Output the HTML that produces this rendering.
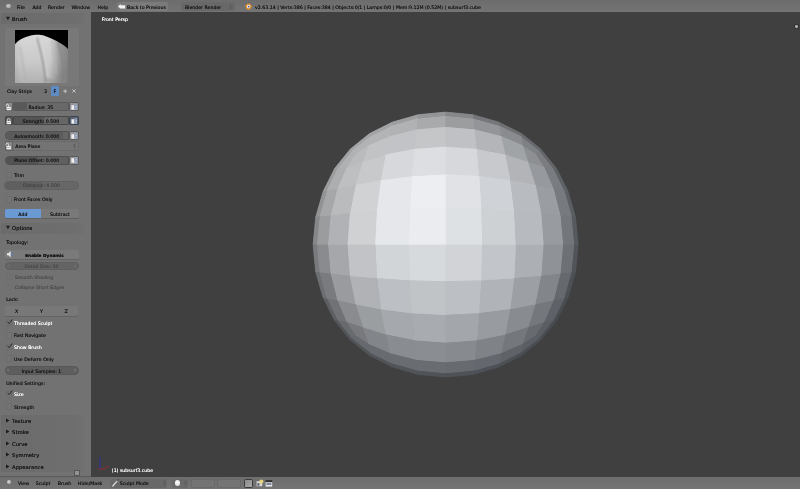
<!DOCTYPE html>
<html><head><meta charset="utf-8"><title>Blender</title>
<style>
html,body{margin:0;padding:0;background:#404040;}
body{width:800px;height:489px;position:relative;overflow:hidden;font-family:"DejaVu Sans","Liberation Sans",sans-serif;}
div,.abs,.t{position:absolute;}
.t{white-space:nowrap;text-shadow:0 0 0.3px currentColor;}
#root{position:absolute;left:0;top:0;width:800px;height:489px;will-change:transform;}
svg{display:block;overflow:visible}
</style></head><body><div id="root">
<div class="viewport" style="left:91.30px;top:12.20px;width:708.70px;height:464.40px;background:#404040;"></div>
<svg class="abs" style="left:0;top:0" width="800" height="489" viewBox="0 0 800 489"><g stroke-width="0.7" stroke-linejoin="round"><polygon points="355.2,335.0 351.8,338.4 369.7,352.6 368.5,343.7" fill="#66696d" stroke="#66696d"/>
<polygon points="350.2,340.0 369.6,355.6 369.7,352.6 351.8,338.4" fill="#525558" stroke="#525558"/>
<polygon points="392.6,367.1 391.7,363.4 369.7,352.6 369.6,355.6" fill="#515458" stroke="#515458"/>
<polygon points="389.9,353.0 368.5,343.7 369.7,352.6 391.7,363.4" fill="#686b6f" stroke="#686b6f"/>
<polygon points="445.6,362.3 416.4,359.7 417.6,370.7 445.6,373.4" fill="#696d72" stroke="#696d72"/>
<polygon points="389.9,353.0 391.7,363.4 417.6,370.7 416.4,359.7" fill="#696d71" stroke="#696d71"/>
<polygon points="392.6,367.1 418.3,374.5 417.6,370.7 391.7,363.4" fill="#515459" stroke="#515459"/>
<polygon points="445.6,377.1 445.6,373.4 417.6,370.7 418.3,374.5" fill="#505459" stroke="#505459"/>
<polygon points="536.0,335.0 522.7,343.7 521.5,352.6 539.4,338.4" fill="#5b5e64" stroke="#5b5e64"/>
<polygon points="501.3,353.0 499.5,363.4 521.5,352.6 522.7,343.7" fill="#5f6368" stroke="#5f6368"/>
<polygon points="498.6,367.1 521.6,355.6 521.5,352.6 499.5,363.4" fill="#4c5055" stroke="#4c5055"/>
<polygon points="541.0,340.0 539.4,338.4 521.5,352.6 521.6,355.6" fill="#4a4e53" stroke="#4a4e53"/>
<polygon points="445.6,362.3 445.6,373.4 473.6,370.7 474.8,359.7" fill="#676b70" stroke="#676b70"/>
<polygon points="445.6,377.1 472.9,374.5 473.6,370.7 445.6,373.4" fill="#4f5358" stroke="#4f5358"/>
<polygon points="498.6,367.1 499.5,363.4 473.6,370.7 472.9,374.5" fill="#4e5157" stroke="#4e5157"/>
<polygon points="501.3,353.0 474.8,359.7 473.6,370.7 499.5,363.4" fill="#64676d" stroke="#64676d"/>
<polygon points="355.2,154.2 368.5,145.5 369.7,136.6 351.8,150.8" fill="#b2b3b4" stroke="#b2b3b4"/>
<polygon points="389.9,136.2 391.7,125.8 369.7,136.6 368.5,145.5" fill="#b3b4b6" stroke="#b3b4b6"/>
<polygon points="392.6,122.1 369.6,133.6 369.7,136.6 391.7,125.8" fill="#a2a3a5" stroke="#a2a3a5"/>
<polygon points="350.2,149.2 351.8,150.8 369.7,136.6 369.6,133.6" fill="#a4a5a6" stroke="#a4a5a6"/>
<polygon points="445.6,126.9 445.6,115.8 417.6,118.5 416.4,129.5" fill="#a8aaac" stroke="#a8aaac"/>
<polygon points="445.6,112.1 418.3,114.7 417.6,118.5 445.6,115.8" fill="#949597" stroke="#949597"/>
<polygon points="392.6,122.1 391.7,125.8 417.6,118.5 418.3,114.7" fill="#9d9ea0" stroke="#9d9ea0"/>
<polygon points="389.9,136.2 416.4,129.5 417.6,118.5 391.7,125.8" fill="#b1b2b4" stroke="#b1b2b4"/>
<polygon points="536.0,154.2 539.4,150.8 521.5,136.6 522.7,145.5" fill="#7e8184" stroke="#7e8184"/>
<polygon points="541.0,149.2 521.6,133.6 521.5,136.6 539.4,150.8" fill="#686a6e" stroke="#686a6e"/>
<polygon points="498.6,122.1 499.5,125.8 521.5,136.6 521.6,133.6" fill="#6e7073" stroke="#6e7073"/>
<polygon points="501.3,136.2 522.7,145.5 521.5,136.6 499.5,125.8" fill="#898b8e" stroke="#898b8e"/>
<polygon points="445.6,126.9 474.8,129.5 473.6,118.5 445.6,115.8" fill="#9b9d9f" stroke="#9b9d9f"/>
<polygon points="501.3,136.2 499.5,125.8 473.6,118.5 474.8,129.5" fill="#939598" stroke="#939598"/>
<polygon points="498.6,122.1 472.9,114.7 473.6,118.5 499.5,125.8" fill="#75777a" stroke="#75777a"/>
<polygon points="445.6,112.1 445.6,115.8 473.6,118.5 472.9,114.7" fill="#868789" stroke="#868789"/>
<polygon points="355.2,335.0 368.5,343.7 362.9,327.3 346.5,321.7" fill="#77797d" stroke="#77797d"/>
<polygon points="389.9,353.0 385.9,334.6 362.9,327.3 368.5,343.7" fill="#828589" stroke="#828589"/>
<polygon points="381.0,309.2 355.6,304.3 362.9,327.3 385.9,334.6" fill="#9b9ea1" stroke="#9b9ea1"/>
<polygon points="337.2,300.3 346.5,321.7 362.9,327.3 355.6,304.3" fill="#898b8f" stroke="#898b8f"/>
<polygon points="445.6,362.3 445.6,342.5 414.3,340.2 416.4,359.7" fill="#8a8e92" stroke="#8a8e92"/>
<polygon points="445.6,314.9 411.9,313.2 414.3,340.2 445.6,342.5" fill="#a8abb0" stroke="#a8abb0"/>
<polygon points="381.0,309.2 385.9,334.6 414.3,340.2 411.9,313.2" fill="#a5a8ac" stroke="#a5a8ac"/>
<polygon points="389.9,353.0 416.4,359.7 414.3,340.2 385.9,334.6" fill="#898c90" stroke="#898c90"/>
<polygon points="445.6,244.6 408.9,244.6 409.8,280.4 445.6,281.3" fill="#d7dadd" stroke="#d7dadd"/>
<polygon points="375.3,244.6 377.0,278.3 409.8,280.4 408.9,244.6" fill="#d2d5d8" stroke="#d2d5d8"/>
<polygon points="381.0,309.2 411.9,313.2 409.8,280.4 377.0,278.3" fill="#bcbfc3" stroke="#bcbfc3"/>
<polygon points="445.6,314.9 445.6,281.3 409.8,280.4 411.9,313.2" fill="#c1c4c7" stroke="#c1c4c7"/>
<polygon points="327.9,244.6 330.5,273.8 350.0,275.9 347.7,244.6" fill="#a5a7aa" stroke="#a5a7aa"/>
<polygon points="337.2,300.3 355.6,304.3 350.0,275.9 330.5,273.8" fill="#999b9e" stroke="#999b9e"/>
<polygon points="381.0,309.2 377.0,278.3 350.0,275.9 355.6,304.3" fill="#b0b2b5" stroke="#b0b2b5"/>
<polygon points="375.3,244.6 347.7,244.6 350.0,275.9 377.0,278.3" fill="#c1c3c6" stroke="#c1c3c6"/>
<polygon points="536.0,335.0 544.7,321.7 528.3,327.3 522.7,343.7" fill="#676b70" stroke="#676b70"/>
<polygon points="554.0,300.3 535.6,304.3 528.3,327.3 544.7,321.7" fill="#74787d" stroke="#74787d"/>
<polygon points="510.2,309.2 505.3,334.6 528.3,327.3 535.6,304.3" fill="#888c91" stroke="#888c91"/>
<polygon points="501.3,353.0 522.7,343.7 528.3,327.3 505.3,334.6" fill="#74787d" stroke="#74787d"/>
<polygon points="563.3,244.6 543.5,244.6 541.2,275.9 560.7,273.8" fill="#8f9297" stroke="#8f9297"/>
<polygon points="515.9,244.6 514.2,278.3 541.2,275.9 543.5,244.6" fill="#acb0b4" stroke="#acb0b4"/>
<polygon points="510.2,309.2 535.6,304.3 541.2,275.9 514.2,278.3" fill="#9ca0a4" stroke="#9ca0a4"/>
<polygon points="554.0,300.3 560.7,273.8 541.2,275.9 535.6,304.3" fill="#82868b" stroke="#82868b"/>
<polygon points="445.6,244.6 445.6,281.3 481.4,280.4 482.3,244.6" fill="#d1d3d7" stroke="#d1d3d7"/>
<polygon points="445.6,314.9 479.3,313.2 481.4,280.4 445.6,281.3" fill="#bcbfc3" stroke="#bcbfc3"/>
<polygon points="510.2,309.2 514.2,278.3 481.4,280.4 479.3,313.2" fill="#b0b3b7" stroke="#b0b3b7"/>
<polygon points="515.9,244.6 482.3,244.6 481.4,280.4 514.2,278.3" fill="#c2c5ca" stroke="#c2c5ca"/>
<polygon points="445.6,362.3 474.8,359.7 476.9,340.2 445.6,342.5" fill="#878a8f" stroke="#878a8f"/>
<polygon points="501.3,353.0 505.3,334.6 476.9,340.2 474.8,359.7" fill="#7f8388" stroke="#7f8388"/>
<polygon points="510.2,309.2 479.3,313.2 476.9,340.2 505.3,334.6" fill="#989ca1" stroke="#989ca1"/>
<polygon points="445.6,314.9 445.6,342.5 476.9,340.2 479.3,313.2" fill="#a3a7ab" stroke="#a3a7ab"/>
<polygon points="536.0,154.2 522.7,145.5 528.3,161.9 544.7,167.5" fill="#8d8f93" stroke="#8d8f93"/>
<polygon points="501.3,136.2 505.3,154.6 528.3,161.9 522.7,145.5" fill="#a1a4a7" stroke="#a1a4a7"/>
<polygon points="510.2,180.0 535.6,184.9 528.3,161.9 505.3,154.6" fill="#b2b4b8" stroke="#b2b4b8"/>
<polygon points="554.0,188.9 544.7,167.5 528.3,161.9 535.6,184.9" fill="#96999d" stroke="#96999d"/>
<polygon points="445.6,126.9 445.6,146.7 476.9,149.0 474.8,129.5" fill="#bfc1c4" stroke="#bfc1c4"/>
<polygon points="445.6,174.3 479.3,176.0 476.9,149.0 445.6,146.7" fill="#d6d8db" stroke="#d6d8db"/>
<polygon points="510.2,180.0 505.3,154.6 476.9,149.0 479.3,176.0" fill="#c7c9cd" stroke="#c7c9cd"/>
<polygon points="501.3,136.2 474.8,129.5 476.9,149.0 505.3,154.6" fill="#b3b5b8" stroke="#b3b5b8"/>
<polygon points="445.6,244.6 482.3,244.6 481.4,208.8 445.6,207.9" fill="#dee1e4" stroke="#dee1e4"/>
<polygon points="515.9,244.6 514.2,210.9 481.4,208.8 482.3,244.6" fill="#ced1d4" stroke="#ced1d4"/>
<polygon points="510.2,180.0 479.3,176.0 481.4,208.8 514.2,210.9" fill="#cfd2d6" stroke="#cfd2d6"/>
<polygon points="445.6,174.3 445.6,207.9 481.4,208.8 479.3,176.0" fill="#e0e2e6" stroke="#e0e2e6"/>
<polygon points="563.3,244.6 560.7,215.4 541.2,213.3 543.5,244.6" fill="#989ba0" stroke="#989ba0"/>
<polygon points="554.0,188.9 535.6,184.9 541.2,213.3 560.7,215.4" fill="#9a9da1" stroke="#9a9da1"/>
<polygon points="510.2,180.0 514.2,210.9 541.2,213.3 535.6,184.9" fill="#b8bbbf" stroke="#b8bbbf"/>
<polygon points="515.9,244.6 543.5,244.6 541.2,213.3 514.2,210.9" fill="#b7babe" stroke="#b7babe"/>
<polygon points="355.2,154.2 346.5,167.5 362.9,161.9 368.5,145.5" fill="#babbbd" stroke="#babbbd"/>
<polygon points="337.2,188.9 355.6,184.9 362.9,161.9 346.5,167.5" fill="#bdbfc1" stroke="#bdbfc1"/>
<polygon points="381.0,180.0 385.9,154.6 362.9,161.9 355.6,184.9" fill="#c8c9cb" stroke="#c8c9cb"/>
<polygon points="389.9,136.2 368.5,145.5 362.9,161.9 385.9,154.6" fill="#c1c3c4" stroke="#c1c3c4"/>
<polygon points="327.9,244.6 347.7,244.6 350.0,213.3 330.5,215.4" fill="#b1b2b5" stroke="#b1b2b5"/>
<polygon points="375.3,244.6 377.0,210.9 350.0,213.3 347.7,244.6" fill="#cfd1d3" stroke="#cfd1d3"/>
<polygon points="381.0,180.0 355.6,184.9 350.0,213.3 377.0,210.9" fill="#d0d2d4" stroke="#d0d2d4"/>
<polygon points="337.2,188.9 330.5,215.4 350.0,213.3 355.6,184.9" fill="#babbbd" stroke="#babbbd"/>
<polygon points="445.6,244.6 445.6,207.9 409.8,208.8 408.9,244.6" fill="#eaecf0" stroke="#eaecf0"/>
<polygon points="445.6,174.3 411.9,176.0 409.8,208.8 445.6,207.9" fill="#eceef1" stroke="#eceef1"/>
<polygon points="381.0,180.0 377.0,210.9 409.8,208.8 411.9,176.0" fill="#e6e7ea" stroke="#e6e7ea"/>
<polygon points="375.3,244.6 408.9,244.6 409.8,208.8 377.0,210.9" fill="#e5e7ea" stroke="#e5e7ea"/>
<polygon points="445.6,126.9 416.4,129.5 414.3,149.0 445.6,146.7" fill="#c4c6c8" stroke="#c4c6c8"/>
<polygon points="389.9,136.2 385.9,154.6 414.3,149.0 416.4,129.5" fill="#c2c3c6" stroke="#c2c3c6"/>
<polygon points="381.0,180.0 411.9,176.0 414.3,149.0 385.9,154.6" fill="#d7d8db" stroke="#d7d8db"/>
<polygon points="445.6,174.3 445.6,146.7 414.3,149.0 411.9,176.0" fill="#dcdee1" stroke="#dcdee1"/>
<polygon points="536.0,335.0 539.4,338.4 553.6,320.5 544.7,321.7" fill="#5a5e63" stroke="#5a5e63"/>
<polygon points="541.0,340.0 556.6,320.6 553.6,320.5 539.4,338.4" fill="#494d52" stroke="#494d52"/>
<polygon points="568.1,297.6 564.4,298.5 553.6,320.5 556.6,320.6" fill="#494d52" stroke="#494d52"/>
<polygon points="554.0,300.3 544.7,321.7 553.6,320.5 564.4,298.5" fill="#5e6167" stroke="#5e6167"/>
<polygon points="563.3,244.6 560.7,273.8 571.7,272.6 574.4,244.6" fill="#6d7075" stroke="#6d7075"/>
<polygon points="554.0,300.3 564.4,298.5 571.7,272.6 560.7,273.8" fill="#65696e" stroke="#65696e"/>
<polygon points="568.1,297.6 575.5,271.9 571.7,272.6 564.4,298.5" fill="#4d5156" stroke="#4d5156"/>
<polygon points="578.1,244.6 574.4,244.6 571.7,272.6 575.5,271.9" fill="#51555b" stroke="#51555b"/>
<polygon points="536.0,154.2 544.7,167.5 553.6,168.7 539.4,150.8" fill="#7a7c80" stroke="#7a7c80"/>
<polygon points="554.0,188.9 564.4,190.7 553.6,168.7 544.7,167.5" fill="#797c80" stroke="#797c80"/>
<polygon points="568.1,191.6 556.6,168.6 553.6,168.7 564.4,190.7" fill="#5e6166" stroke="#5e6166"/>
<polygon points="541.0,149.2 539.4,150.8 553.6,168.7 556.6,168.6" fill="#636569" stroke="#636569"/>
<polygon points="563.3,244.6 574.4,244.6 571.7,216.6 560.7,215.4" fill="#73777c" stroke="#73777c"/>
<polygon points="578.1,244.6 575.5,217.3 571.7,216.6 574.4,244.6" fill="#565a5f" stroke="#565a5f"/>
<polygon points="568.1,191.6 564.4,190.7 571.7,216.6 575.5,217.3" fill="#5b5e63" stroke="#5b5e63"/>
<polygon points="554.0,188.9 560.7,215.4 571.7,216.6 564.4,190.7" fill="#777a7f" stroke="#777a7f"/>
<polygon points="355.2,335.0 346.5,321.7 337.6,320.5 351.8,338.4" fill="#686b6e" stroke="#686b6e"/>
<polygon points="337.2,300.3 326.8,298.5 337.6,320.5 346.5,321.7" fill="#707276" stroke="#707276"/>
<polygon points="323.1,297.6 334.6,320.6 337.6,320.5 326.8,298.5" fill="#5d5f62" stroke="#5d5f62"/>
<polygon points="350.2,340.0 351.8,338.4 337.6,320.5 334.6,320.6" fill="#54565a" stroke="#54565a"/>
<polygon points="327.9,244.6 316.8,244.6 319.5,272.6 330.5,273.8" fill="#898b8e" stroke="#898b8e"/>
<polygon points="313.1,244.6 315.7,271.9 319.5,272.6 316.8,244.6" fill="#7a7b7e" stroke="#7a7b7e"/>
<polygon points="323.1,297.6 326.8,298.5 319.5,272.6 315.7,271.9" fill="#6c6e71" stroke="#6c6e71"/>
<polygon points="337.2,300.3 330.5,273.8 319.5,272.6 326.8,298.5" fill="#797b7e" stroke="#797b7e"/>
<polygon points="355.2,154.2 351.8,150.8 337.6,168.7 346.5,167.5" fill="#b0b1b3" stroke="#b0b1b3"/>
<polygon points="350.2,149.2 334.6,168.6 337.6,168.7 351.8,150.8" fill="#a1a2a4" stroke="#a1a2a4"/>
<polygon points="323.1,191.6 326.8,190.7 337.6,168.7 334.6,168.6" fill="#9b9c9e" stroke="#9b9c9e"/>
<polygon points="337.2,188.9 346.5,167.5 337.6,168.7 326.8,190.7" fill="#adaeb0" stroke="#adaeb0"/>
<polygon points="327.9,244.6 330.5,215.4 319.5,216.6 316.8,244.6" fill="#9a9c9e" stroke="#9a9c9e"/>
<polygon points="337.2,188.9 326.8,190.7 319.5,216.6 330.5,215.4" fill="#a6a7a9" stroke="#a6a7a9"/>
<polygon points="323.1,191.6 315.7,217.3 319.5,216.6 326.8,190.7" fill="#929395" stroke="#929395"/>
<polygon points="313.1,244.6 316.8,244.6 319.5,216.6 315.7,217.3" fill="#868789" stroke="#868789"/></g>
<g><polygon points="355.2,335.0 351.8,338.4 369.7,352.6 368.5,343.7" fill="#66696d"/>
<polygon points="350.2,340.0 369.6,355.6 369.7,352.6 351.8,338.4" fill="#525558"/>
<polygon points="392.6,367.1 391.7,363.4 369.7,352.6 369.6,355.6" fill="#515458"/>
<polygon points="389.9,353.0 368.5,343.7 369.7,352.6 391.7,363.4" fill="#686b6f"/>
<polygon points="445.6,362.3 416.4,359.7 417.6,370.7 445.6,373.4" fill="#696d72"/>
<polygon points="389.9,353.0 391.7,363.4 417.6,370.7 416.4,359.7" fill="#696d71"/>
<polygon points="392.6,367.1 418.3,374.5 417.6,370.7 391.7,363.4" fill="#515459"/>
<polygon points="445.6,377.1 445.6,373.4 417.6,370.7 418.3,374.5" fill="#505459"/>
<polygon points="536.0,335.0 522.7,343.7 521.5,352.6 539.4,338.4" fill="#5b5e64"/>
<polygon points="501.3,353.0 499.5,363.4 521.5,352.6 522.7,343.7" fill="#5f6368"/>
<polygon points="498.6,367.1 521.6,355.6 521.5,352.6 499.5,363.4" fill="#4c5055"/>
<polygon points="541.0,340.0 539.4,338.4 521.5,352.6 521.6,355.6" fill="#4a4e53"/>
<polygon points="445.6,362.3 445.6,373.4 473.6,370.7 474.8,359.7" fill="#676b70"/>
<polygon points="445.6,377.1 472.9,374.5 473.6,370.7 445.6,373.4" fill="#4f5358"/>
<polygon points="498.6,367.1 499.5,363.4 473.6,370.7 472.9,374.5" fill="#4e5157"/>
<polygon points="501.3,353.0 474.8,359.7 473.6,370.7 499.5,363.4" fill="#64676d"/>
<polygon points="355.2,154.2 368.5,145.5 369.7,136.6 351.8,150.8" fill="#b2b3b4"/>
<polygon points="389.9,136.2 391.7,125.8 369.7,136.6 368.5,145.5" fill="#b3b4b6"/>
<polygon points="392.6,122.1 369.6,133.6 369.7,136.6 391.7,125.8" fill="#a2a3a5"/>
<polygon points="350.2,149.2 351.8,150.8 369.7,136.6 369.6,133.6" fill="#a4a5a6"/>
<polygon points="445.6,126.9 445.6,115.8 417.6,118.5 416.4,129.5" fill="#a8aaac"/>
<polygon points="445.6,112.1 418.3,114.7 417.6,118.5 445.6,115.8" fill="#949597"/>
<polygon points="392.6,122.1 391.7,125.8 417.6,118.5 418.3,114.7" fill="#9d9ea0"/>
<polygon points="389.9,136.2 416.4,129.5 417.6,118.5 391.7,125.8" fill="#b1b2b4"/>
<polygon points="536.0,154.2 539.4,150.8 521.5,136.6 522.7,145.5" fill="#7e8184"/>
<polygon points="541.0,149.2 521.6,133.6 521.5,136.6 539.4,150.8" fill="#686a6e"/>
<polygon points="498.6,122.1 499.5,125.8 521.5,136.6 521.6,133.6" fill="#6e7073"/>
<polygon points="501.3,136.2 522.7,145.5 521.5,136.6 499.5,125.8" fill="#898b8e"/>
<polygon points="445.6,126.9 474.8,129.5 473.6,118.5 445.6,115.8" fill="#9b9d9f"/>
<polygon points="501.3,136.2 499.5,125.8 473.6,118.5 474.8,129.5" fill="#939598"/>
<polygon points="498.6,122.1 472.9,114.7 473.6,118.5 499.5,125.8" fill="#75777a"/>
<polygon points="445.6,112.1 445.6,115.8 473.6,118.5 472.9,114.7" fill="#868789"/>
<polygon points="355.2,335.0 368.5,343.7 362.9,327.3 346.5,321.7" fill="#77797d"/>
<polygon points="389.9,353.0 385.9,334.6 362.9,327.3 368.5,343.7" fill="#828589"/>
<polygon points="381.0,309.2 355.6,304.3 362.9,327.3 385.9,334.6" fill="#9b9ea1"/>
<polygon points="337.2,300.3 346.5,321.7 362.9,327.3 355.6,304.3" fill="#898b8f"/>
<polygon points="445.6,362.3 445.6,342.5 414.3,340.2 416.4,359.7" fill="#8a8e92"/>
<polygon points="445.6,314.9 411.9,313.2 414.3,340.2 445.6,342.5" fill="#a8abb0"/>
<polygon points="381.0,309.2 385.9,334.6 414.3,340.2 411.9,313.2" fill="#a5a8ac"/>
<polygon points="389.9,353.0 416.4,359.7 414.3,340.2 385.9,334.6" fill="#898c90"/>
<polygon points="445.6,244.6 408.9,244.6 409.8,280.4 445.6,281.3" fill="#d7dadd"/>
<polygon points="375.3,244.6 377.0,278.3 409.8,280.4 408.9,244.6" fill="#d2d5d8"/>
<polygon points="381.0,309.2 411.9,313.2 409.8,280.4 377.0,278.3" fill="#bcbfc3"/>
<polygon points="445.6,314.9 445.6,281.3 409.8,280.4 411.9,313.2" fill="#c1c4c7"/>
<polygon points="327.9,244.6 330.5,273.8 350.0,275.9 347.7,244.6" fill="#a5a7aa"/>
<polygon points="337.2,300.3 355.6,304.3 350.0,275.9 330.5,273.8" fill="#999b9e"/>
<polygon points="381.0,309.2 377.0,278.3 350.0,275.9 355.6,304.3" fill="#b0b2b5"/>
<polygon points="375.3,244.6 347.7,244.6 350.0,275.9 377.0,278.3" fill="#c1c3c6"/>
<polygon points="536.0,335.0 544.7,321.7 528.3,327.3 522.7,343.7" fill="#676b70"/>
<polygon points="554.0,300.3 535.6,304.3 528.3,327.3 544.7,321.7" fill="#74787d"/>
<polygon points="510.2,309.2 505.3,334.6 528.3,327.3 535.6,304.3" fill="#888c91"/>
<polygon points="501.3,353.0 522.7,343.7 528.3,327.3 505.3,334.6" fill="#74787d"/>
<polygon points="563.3,244.6 543.5,244.6 541.2,275.9 560.7,273.8" fill="#8f9297"/>
<polygon points="515.9,244.6 514.2,278.3 541.2,275.9 543.5,244.6" fill="#acb0b4"/>
<polygon points="510.2,309.2 535.6,304.3 541.2,275.9 514.2,278.3" fill="#9ca0a4"/>
<polygon points="554.0,300.3 560.7,273.8 541.2,275.9 535.6,304.3" fill="#82868b"/>
<polygon points="445.6,244.6 445.6,281.3 481.4,280.4 482.3,244.6" fill="#d1d3d7"/>
<polygon points="445.6,314.9 479.3,313.2 481.4,280.4 445.6,281.3" fill="#bcbfc3"/>
<polygon points="510.2,309.2 514.2,278.3 481.4,280.4 479.3,313.2" fill="#b0b3b7"/>
<polygon points="515.9,244.6 482.3,244.6 481.4,280.4 514.2,278.3" fill="#c2c5ca"/>
<polygon points="445.6,362.3 474.8,359.7 476.9,340.2 445.6,342.5" fill="#878a8f"/>
<polygon points="501.3,353.0 505.3,334.6 476.9,340.2 474.8,359.7" fill="#7f8388"/>
<polygon points="510.2,309.2 479.3,313.2 476.9,340.2 505.3,334.6" fill="#989ca1"/>
<polygon points="445.6,314.9 445.6,342.5 476.9,340.2 479.3,313.2" fill="#a3a7ab"/>
<polygon points="536.0,154.2 522.7,145.5 528.3,161.9 544.7,167.5" fill="#8d8f93"/>
<polygon points="501.3,136.2 505.3,154.6 528.3,161.9 522.7,145.5" fill="#a1a4a7"/>
<polygon points="510.2,180.0 535.6,184.9 528.3,161.9 505.3,154.6" fill="#b2b4b8"/>
<polygon points="554.0,188.9 544.7,167.5 528.3,161.9 535.6,184.9" fill="#96999d"/>
<polygon points="445.6,126.9 445.6,146.7 476.9,149.0 474.8,129.5" fill="#bfc1c4"/>
<polygon points="445.6,174.3 479.3,176.0 476.9,149.0 445.6,146.7" fill="#d6d8db"/>
<polygon points="510.2,180.0 505.3,154.6 476.9,149.0 479.3,176.0" fill="#c7c9cd"/>
<polygon points="501.3,136.2 474.8,129.5 476.9,149.0 505.3,154.6" fill="#b3b5b8"/>
<polygon points="445.6,244.6 482.3,244.6 481.4,208.8 445.6,207.9" fill="#dee1e4"/>
<polygon points="515.9,244.6 514.2,210.9 481.4,208.8 482.3,244.6" fill="#ced1d4"/>
<polygon points="510.2,180.0 479.3,176.0 481.4,208.8 514.2,210.9" fill="#cfd2d6"/>
<polygon points="445.6,174.3 445.6,207.9 481.4,208.8 479.3,176.0" fill="#e0e2e6"/>
<polygon points="563.3,244.6 560.7,215.4 541.2,213.3 543.5,244.6" fill="#989ba0"/>
<polygon points="554.0,188.9 535.6,184.9 541.2,213.3 560.7,215.4" fill="#9a9da1"/>
<polygon points="510.2,180.0 514.2,210.9 541.2,213.3 535.6,184.9" fill="#b8bbbf"/>
<polygon points="515.9,244.6 543.5,244.6 541.2,213.3 514.2,210.9" fill="#b7babe"/>
<polygon points="355.2,154.2 346.5,167.5 362.9,161.9 368.5,145.5" fill="#babbbd"/>
<polygon points="337.2,188.9 355.6,184.9 362.9,161.9 346.5,167.5" fill="#bdbfc1"/>
<polygon points="381.0,180.0 385.9,154.6 362.9,161.9 355.6,184.9" fill="#c8c9cb"/>
<polygon points="389.9,136.2 368.5,145.5 362.9,161.9 385.9,154.6" fill="#c1c3c4"/>
<polygon points="327.9,244.6 347.7,244.6 350.0,213.3 330.5,215.4" fill="#b1b2b5"/>
<polygon points="375.3,244.6 377.0,210.9 350.0,213.3 347.7,244.6" fill="#cfd1d3"/>
<polygon points="381.0,180.0 355.6,184.9 350.0,213.3 377.0,210.9" fill="#d0d2d4"/>
<polygon points="337.2,188.9 330.5,215.4 350.0,213.3 355.6,184.9" fill="#babbbd"/>
<polygon points="445.6,244.6 445.6,207.9 409.8,208.8 408.9,244.6" fill="#eaecf0"/>
<polygon points="445.6,174.3 411.9,176.0 409.8,208.8 445.6,207.9" fill="#eceef1"/>
<polygon points="381.0,180.0 377.0,210.9 409.8,208.8 411.9,176.0" fill="#e6e7ea"/>
<polygon points="375.3,244.6 408.9,244.6 409.8,208.8 377.0,210.9" fill="#e5e7ea"/>
<polygon points="445.6,126.9 416.4,129.5 414.3,149.0 445.6,146.7" fill="#c4c6c8"/>
<polygon points="389.9,136.2 385.9,154.6 414.3,149.0 416.4,129.5" fill="#c2c3c6"/>
<polygon points="381.0,180.0 411.9,176.0 414.3,149.0 385.9,154.6" fill="#d7d8db"/>
<polygon points="445.6,174.3 445.6,146.7 414.3,149.0 411.9,176.0" fill="#dcdee1"/>
<polygon points="536.0,335.0 539.4,338.4 553.6,320.5 544.7,321.7" fill="#5a5e63"/>
<polygon points="541.0,340.0 556.6,320.6 553.6,320.5 539.4,338.4" fill="#494d52"/>
<polygon points="568.1,297.6 564.4,298.5 553.6,320.5 556.6,320.6" fill="#494d52"/>
<polygon points="554.0,300.3 544.7,321.7 553.6,320.5 564.4,298.5" fill="#5e6167"/>
<polygon points="563.3,244.6 560.7,273.8 571.7,272.6 574.4,244.6" fill="#6d7075"/>
<polygon points="554.0,300.3 564.4,298.5 571.7,272.6 560.7,273.8" fill="#65696e"/>
<polygon points="568.1,297.6 575.5,271.9 571.7,272.6 564.4,298.5" fill="#4d5156"/>
<polygon points="578.1,244.6 574.4,244.6 571.7,272.6 575.5,271.9" fill="#51555b"/>
<polygon points="536.0,154.2 544.7,167.5 553.6,168.7 539.4,150.8" fill="#7a7c80"/>
<polygon points="554.0,188.9 564.4,190.7 553.6,168.7 544.7,167.5" fill="#797c80"/>
<polygon points="568.1,191.6 556.6,168.6 553.6,168.7 564.4,190.7" fill="#5e6166"/>
<polygon points="541.0,149.2 539.4,150.8 553.6,168.7 556.6,168.6" fill="#636569"/>
<polygon points="563.3,244.6 574.4,244.6 571.7,216.6 560.7,215.4" fill="#73777c"/>
<polygon points="578.1,244.6 575.5,217.3 571.7,216.6 574.4,244.6" fill="#565a5f"/>
<polygon points="568.1,191.6 564.4,190.7 571.7,216.6 575.5,217.3" fill="#5b5e63"/>
<polygon points="554.0,188.9 560.7,215.4 571.7,216.6 564.4,190.7" fill="#777a7f"/>
<polygon points="355.2,335.0 346.5,321.7 337.6,320.5 351.8,338.4" fill="#686b6e"/>
<polygon points="337.2,300.3 326.8,298.5 337.6,320.5 346.5,321.7" fill="#707276"/>
<polygon points="323.1,297.6 334.6,320.6 337.6,320.5 326.8,298.5" fill="#5d5f62"/>
<polygon points="350.2,340.0 351.8,338.4 337.6,320.5 334.6,320.6" fill="#54565a"/>
<polygon points="327.9,244.6 316.8,244.6 319.5,272.6 330.5,273.8" fill="#898b8e"/>
<polygon points="313.1,244.6 315.7,271.9 319.5,272.6 316.8,244.6" fill="#7a7b7e"/>
<polygon points="323.1,297.6 326.8,298.5 319.5,272.6 315.7,271.9" fill="#6c6e71"/>
<polygon points="337.2,300.3 330.5,273.8 319.5,272.6 326.8,298.5" fill="#797b7e"/>
<polygon points="355.2,154.2 351.8,150.8 337.6,168.7 346.5,167.5" fill="#b0b1b3"/>
<polygon points="350.2,149.2 334.6,168.6 337.6,168.7 351.8,150.8" fill="#a1a2a4"/>
<polygon points="323.1,191.6 326.8,190.7 337.6,168.7 334.6,168.6" fill="#9b9c9e"/>
<polygon points="337.2,188.9 346.5,167.5 337.6,168.7 326.8,190.7" fill="#adaeb0"/>
<polygon points="327.9,244.6 330.5,215.4 319.5,216.6 316.8,244.6" fill="#9a9c9e"/>
<polygon points="337.2,188.9 326.8,190.7 319.5,216.6 330.5,215.4" fill="#a6a7a9"/>
<polygon points="323.1,191.6 315.7,217.3 319.5,216.6 326.8,190.7" fill="#929395"/>
<polygon points="313.1,244.6 316.8,244.6 319.5,216.6 315.7,217.3" fill="#868789"/></g></svg>
<div class="header" style="left:0.00px;top:0.00px;width:800.00px;height:12.40px;background:linear-gradient(#6c6c6c,#747474);"></div>
<div style="left:0.00px;top:11.60px;width:91.30px;height:0.90px;background:#4c4c4c;"></div>
<div class="toolshelf" style="left:0.00px;top:12.40px;width:91.30px;height:464.20px;background:#727272;"></div>
<div class="header" style="left:0.00px;top:476.60px;width:800.00px;height:12.40px;background:linear-gradient(#6e6e6e,#747474);"></div>
<div style="left:0.00px;top:476.40px;width:91.30px;height:0.80px;background:#5a5a5a;"></div>
<span class="t" style="left:17.00px;top:5.07px;font-size:4.70px;line-height:6.11px;color:#161616;">File</span>
<span class="t" style="left:32.50px;top:5.07px;font-size:4.70px;line-height:6.11px;color:#161616;">Add</span>
<span class="t" style="left:48.00px;top:5.07px;font-size:4.70px;line-height:6.11px;color:#161616;">Render</span>
<span class="t" style="left:71.50px;top:5.07px;font-size:4.70px;line-height:6.11px;color:#161616;">Window</span>
<span class="t" style="left:97.50px;top:5.07px;font-size:4.70px;line-height:6.11px;color:#161616;">Help</span>
<div style="left:116.60px;top:1.80px;width:51.10px;height:9.00px;background:#7b7b7b;border-radius:2px;"></div>
<svg class="abs" style="left:117.8px;top:4.2px" width="7.4" height="4.8" viewBox="0 0 7.4 4.8"><path d="M0,2.4 L2.6,0 V1.2 H7.2 V4.4 H2.6 V4.8 Z" fill="#f2f2f2"/></svg>
<span class="t" style="left:127.00px;top:5.22px;font-size:4.70px;line-height:6.11px;color:#161616;">Back to Previous</span>
<div style="left:180.60px;top:1.80px;width:54.00px;height:9.00px;background:#686868;border-radius:2px;"></div>
<svg class="abs" style="left:228.8px;top:3.6px" width="3" height="6" viewBox="0 0 3 6"><path d="M0.2,2.4 L1.5,0.6 L2.8,2.4 Z M0.2,3.6 L1.5,5.4 L2.8,3.6 Z" fill="#555"/></svg>
<svg class="abs" style="left:245.2px;top:3.4px" width="7" height="7" viewBox="0 0 7 7"><circle cx="3.6" cy="3.6" r="2.4" fill="#f0f0f0" stroke="#e08a2c" stroke-width="1.3"/><circle cx="3.7" cy="3.6" r="0.9" fill="#3a5a9a"/><path d="M0.2,3.3 L3,1.2" stroke="#e08a2c" stroke-width="0.9"/></svg>
<div style="left:6.00px;top:3.90px;width:4.60px;height:4.60px;background:radial-gradient(circle at 40% 40%,#c8c8c8,#9a9a9a);border-radius:50%;"></div>
<span class="t" style="left:184.90px;top:5.22px;font-size:4.70px;line-height:6.11px;color:#161616;">Blender Render</span>
<span class="t" style="left:255.00px;top:5.22px;font-size:4.70px;line-height:6.11px;color:#161616;">v2.63.14 | Verts:386 | Faces:384 | Objects:0/1 | Lamps:0/0 | Mem:9.12M (0.52M) | subsurf3.cube</span>
<span class="t" style="left:101.80px;top:17.12px;font-size:4.70px;line-height:6.11px;color:#fff;">Front Persp</span>
<span class="t" style="left:111.80px;top:468.22px;font-size:4.70px;line-height:6.11px;color:#fff;">(1) subsurf3.cube</span>
<div class="panel" style="left:1.00px;top:13.00px;width:82.50px;height:211.00px;background:transparent;"></div>
<div style="left:1.00px;top:13.00px;width:82.50px;height:10.50px;background:linear-gradient(90deg,rgba(0,0,0,0.06),rgba(0,0,0,0.04) 80%,rgba(0,0,0,0.02));"></div>
<svg class="abs" style="left:6.20px;top:16.00px" width="5" height="5" viewBox="0 0 5 5"><polygon points="0,0.8 3.9,0.8 1.95,4.3" fill="#1c1c1c"/></svg>
<span class="t" style="left:12.00px;top:15.80px;font-size:5.25px;line-height:6.83px;color:#161616;">Brush</span>
<div style="left:4.80px;top:27.50px;width:74.40px;height:58.20px;background:#787878;border-radius:1.5px;"></div>
<svg class="abs" style="left:14.8px;top:29.8px;overflow:hidden" width="53.2" height="52.9" viewBox="0 0 53.2 52.9">
<defs>
<linearGradient id="cl" x1="0" y1="0" x2="0" y2="1"><stop offset="0" stop-color="#d8d8d8"/><stop offset="0.55" stop-color="#cacaca"/><stop offset="1" stop-color="#b2b2b2"/></linearGradient>
<linearGradient id="cr" x1="0" y1="0" x2="1" y2="0"><stop offset="0" stop-color="#000" stop-opacity="0.06"/><stop offset="0.12" stop-color="#000" stop-opacity="0"/><stop offset="0.66" stop-color="#000" stop-opacity="0"/><stop offset="0.82" stop-color="#000" stop-opacity="0.22"/><stop offset="1" stop-color="#000" stop-opacity="0.4"/></linearGradient>
<filter id="bl" x="-20%" y="-20%" width="140%" height="140%"><feGaussianBlur stdDeviation="0.9"/></filter>
<clipPath id="cp"><path id="clayp" d="M0,14.2 C3,10.5 10,6 20.5,4.8 C24,4.5 27,5 29.4,5.7 C33,6.8 36,8.2 39.5,10.1 C43,12 46,13.6 48.4,15.2 C50.5,16.6 52,18 53.2,19.6 L53.2,52.9 L0,52.9 Z"/></clipPath>
</defs>
<rect width="53.2" height="52.9" fill="#000"/>
<path d="M0,14.2 C3,10.5 10,6 20.5,4.8 C24,4.5 27,5 29.4,5.7 C33,6.8 36,8.2 39.5,10.1 C43,12 46,13.6 48.4,15.2 C50.5,16.6 52,18 53.2,19.6 L53.2,52.9 L0,52.9 Z" fill="url(#cl)"/>
<rect width="53.2" height="52.9" fill="url(#cr)" clip-path="url(#cp)"/>
<g clip-path="url(#cp)" filter="url(#bl)" fill="none">
<path d="M44,10 C48,22 51,36 50,53 L53.2,53 L53.2,16 Z" fill="#8c8c8c" fill-opacity="0.55"/>
<path d="M22.4,8 C25,18 30,34 30.7,53" stroke="#858585" stroke-width="1.4"/>
<path d="M24.4,9 C27.2,19 32.2,34 32.8,53" stroke="#e4e4e4" stroke-width="1"/>
<path d="M42.7,12 C46,22 49.5,36 49,53" stroke="#858585" stroke-width="1.5"/>
<path d="M5.3,17 C6.5,26 9,40 10.4,50" stroke="#adadad" stroke-width="1.1"/>
<path d="M36,10 C38,18 41,30 41,44" stroke="#bababa" stroke-width="1"/>
<path d="M30,46 C36,50 44,52 53,50 L53,53 L30,53 Z" fill="#8e8e8e" fill-opacity="0.5"/>
</g>
</svg>
<span class="t" style="left:6.90px;top:89.12px;font-size:4.70px;line-height:6.11px;color:#161616;">Clay Strips</span>
<span class="t" style="left:44.30px;top:89.12px;font-size:4.70px;line-height:6.11px;color:#161616;">2</span>
<div style="left:50.60px;top:85.70px;width:8.40px;height:10.60px;background:#5f8bc4;border-radius:1px;"></div>
<span class="t" style="left:53.40px;top:89.12px;font-size:4.70px;line-height:6.11px;color:#161616;">F</span>
<svg class="abs" style="left:63px;top:88.8px" width="4.4" height="4.4" viewBox="0 0 5.2 5.2"><path d="M2.6,0.3 V4.9 M0.3,2.6 H4.9" stroke="#e0e0e0" stroke-width="0.85"/></svg>
<svg class="abs" style="left:72px;top:89px" width="4" height="4" viewBox="0 0 4.8 4.8"><path d="M0.5,0.5 L4.3,4.3 M4.3,0.5 L0.5,4.3" stroke="#e0e0e0" stroke-width="0.85"/></svg>
<div class="iconbtn" style="left:4.50px;top:102.40px;width:8.60px;height:8.60px;background:#8c8c8c;border:0.5px solid #5e5e5e;box-sizing:border-box;border-radius:1px;"></div>
<svg class="abs" style="left:5.10px;top:102.90px" width="7.4" height="8" viewBox="0 0 7.4 8"><path d="M1,3.4 V2.3 a1.25,1.25 0 0 1 2.5,0 V4" stroke="#e6e6e6" stroke-width="0.8" fill="none"/><rect x="1.6" y="4" width="4.4" height="3.2" rx="0.4" fill="#efefef"/><rect x="2.2" y="5.2" width="3.2" height="0.7" fill="#9a9a9a"/></svg>
<div class="slider" style="left:13.00px;top:102.40px;width:55.60px;height:8.60px;background:#696969;border:0.5px solid #5a5a5a;box-sizing:border-box;overflow:hidden;border-radius:1px 1px 1px 1px;"><div style="left:0;top:0;width:13.34px;height:8.60px;background:#595959"></div></div>
<span class="t" style="left:13.00px;width:55.60px;text-align:center;top:104.82px;font-size:4.70px;line-height:6.11px;color:#161616;">Radius: 35</span>
<div class="iconbtn" style="left:69.40px;top:102.40px;width:9.20px;height:8.60px;background:#90949a;border:0.5px solid #5a5a5a;box-sizing:border-box;border-radius:1px;"></div>
<svg class="abs" style="left:69.90px;top:102.90px" width="8" height="8" viewBox="0 0 8 8"><rect x="1.4" y="2.2" width="3" height="4.6" rx="0.4" fill="#f0f0f0"/><rect x="4.4" y="1.4" width="2.6" height="5.4" fill="#b4c0d6" fill-opacity="0.9"/><path d="M4.2,3.6 L6.8,1.8" stroke="#5a6a88" stroke-width="0.7"/><rect x="4.6" y="4.6" width="2.2" height="1" fill="#6d7f9d"/></svg>
<div class="iconbtn" style="left:4.50px;top:116.30px;width:8.60px;height:8.60px;background:#5a5a5a;border:0.5px solid #444;box-sizing:border-box;border-radius:1px;"></div>
<svg class="abs" style="left:5.10px;top:116.80px" width="7.4" height="8" viewBox="0 0 7.4 8"><path d="M2.4,4 V2.9 a1.3,1.3 0 0 1 2.6,0 V4" stroke="#e6e6e6" stroke-width="0.8" fill="none"/><rect x="1.6" y="4" width="4.4" height="3.2" rx="0.4" fill="#efefef"/><rect x="2.2" y="5.2" width="3.2" height="0.7" fill="#9a9a9a"/></svg>
<div class="slider" style="left:13.00px;top:116.30px;width:55.60px;height:8.60px;background:#666;border:0.5px solid #484848;box-sizing:border-box;overflow:hidden;border-radius:1px 1px 1px 1px;"><div style="left:0;top:0;width:30.02px;height:8.60px;background:#555"></div></div>
<span class="t" style="left:13.00px;width:55.60px;text-align:center;top:118.72px;font-size:4.70px;line-height:6.11px;color:#161616;">Strength: 0.500</span>
<div class="iconbtn" style="left:69.40px;top:116.30px;width:9.20px;height:8.60px;background:#5a6472;border:0.5px solid #3c4350;box-sizing:border-box;border-radius:1px;"></div>
<svg class="abs" style="left:69.90px;top:116.80px" width="8" height="8" viewBox="0 0 8 8"><rect x="1.4" y="2.2" width="3" height="4.6" rx="0.4" fill="#f0f0f0"/><rect x="4.4" y="1.4" width="2.6" height="5.4" fill="#b4c0d6" fill-opacity="0.9"/><path d="M4.2,3.6 L6.8,1.8" stroke="#5a6a88" stroke-width="0.7"/><rect x="4.6" y="4.6" width="2.2" height="1" fill="#6d7f9d"/></svg>
<div class="slider" style="left:4.80px;top:131.00px;width:63.80px;height:8.80px;background:#666666;border:0.5px solid #525252;box-sizing:border-box;overflow:hidden;border-radius:4.4px 1px 1px 4.4px;"><div style="left:0;top:0;width:57.42px;height:8.80px;background:#5b5b5b"></div></div>
<span class="t" style="left:4.80px;width:63.80px;text-align:center;top:133.52px;font-size:4.70px;line-height:6.11px;color:#161616;">Autosmooth: 0.000</span>
<div class="iconbtn" style="left:69.40px;top:131.00px;width:9.20px;height:8.80px;background:#90949a;border:0.5px solid #5a5a5a;box-sizing:border-box;border-radius:1px;"></div>
<svg class="abs" style="left:69.90px;top:131.50px" width="8" height="8" viewBox="0 0 8 8"><rect x="1.4" y="2.2" width="3" height="4.6" rx="0.4" fill="#f0f0f0"/><rect x="4.4" y="1.4" width="2.6" height="5.4" fill="#b4c0d6" fill-opacity="0.9"/><path d="M4.2,3.6 L6.8,1.8" stroke="#5a6a88" stroke-width="0.7"/><rect x="4.6" y="4.6" width="2.2" height="1" fill="#6d7f9d"/></svg>
<div style="left:4.50px;top:141.40px;width:74.20px;height:9.20px;background:#747474;border:0.5px solid #6a6a6a;box-sizing:border-box;border-radius:1.5px;"></div>
<div class="iconbtn" style="left:4.50px;top:141.40px;width:8.60px;height:9.20px;background:#868686;border:0.5px solid #606060;box-sizing:border-box;border-radius:1px;"></div>
<svg class="abs" style="left:5.10px;top:141.90px" width="7.4" height="8" viewBox="0 0 7.4 8"><path d="M1,3.4 V2.3 a1.25,1.25 0 0 1 2.5,0 V4" stroke="#e6e6e6" stroke-width="0.8" fill="none"/><rect x="1.6" y="4" width="4.4" height="3.2" rx="0.4" fill="#efefef"/><rect x="2.2" y="5.2" width="3.2" height="0.7" fill="#9a9a9a"/></svg>
<span class="t" style="left:15.30px;top:144.12px;font-size:4.70px;line-height:6.11px;color:#161616;">Area Plane</span>
<svg class="abs" style="left:73.2px;top:143px" width="3" height="6" viewBox="0 0 3 6"><path d="M0.2,2.4 L1.5,0.6 L2.8,2.4 Z M0.2,3.6 L1.5,5.4 L2.8,3.6 Z" fill="#585858"/></svg>
<div class="slider" style="left:4.80px;top:155.80px;width:63.80px;height:9.00px;background:#606060;border:0.5px solid #4e4e4e;box-sizing:border-box;overflow:hidden;border-radius:4.5px 1px 1px 4.5px;"><div style="left:0;top:0;width:31.90px;height:9.00px;background:#535353"></div></div>
<span class="t" style="left:4.80px;width:63.80px;text-align:center;top:158.42px;font-size:4.70px;line-height:6.11px;color:#161616;">Plane Offset: 0.000</span>
<div class="iconbtn" style="left:69.40px;top:155.80px;width:9.20px;height:9.00px;background:#90949a;border:0.5px solid #5a5a5a;box-sizing:border-box;border-radius:1px;"></div>
<svg class="abs" style="left:69.90px;top:156.30px" width="8" height="8" viewBox="0 0 8 8"><rect x="1.4" y="2.2" width="3" height="4.6" rx="0.4" fill="#f0f0f0"/><rect x="4.4" y="1.4" width="2.6" height="5.4" fill="#b4c0d6" fill-opacity="0.9"/><path d="M4.2,3.6 L6.8,1.8" stroke="#5a6a88" stroke-width="0.7"/><rect x="4.6" y="4.6" width="2.2" height="1" fill="#6d7f9d"/></svg>
<div style="left:5.50px;top:171.50px;width:6.60px;height:6.60px;background:#747474;border:0.5px solid #6b6b6b;box-sizing:border-box;border-radius:1.2px;"></div>
<span class="t" style="left:14.00px;top:172.92px;font-size:4.70px;line-height:6.11px;color:#161616;">Trim</span>
<div class="slider" style="left:4.40px;top:181.00px;width:74.20px;height:8.60px;background:#676767;border:0.5px solid #606060;box-sizing:border-box;overflow:hidden;border-radius:4.3px 4.3px 4.3px 4.3px;"><div style="left:0;top:0;width:37.10px;height:8.60px;background:#5f5f5f"></div></div>
<span class="t" style="left:4.40px;width:74.20px;text-align:center;top:183.42px;font-size:4.70px;line-height:6.11px;color:#464646;">Distance: 0.500</span>
<div style="left:5.50px;top:196.00px;width:6.60px;height:6.60px;background:#747474;border:0.5px solid #6b6b6b;box-sizing:border-box;border-radius:1.2px;"></div>
<span class="t" style="left:14.00px;top:197.42px;font-size:4.70px;line-height:6.11px;color:#161616;">Front Faces Only</span>
<div style="left:4.60px;top:209.10px;width:36.60px;height:8.70px;background:#6a99d4;border-radius:1.5px 0 0 1.5px;box-shadow:0 0.5px 0.5px rgba(0,0,0,0.3);"></div>
<span class="t" style="left:4.60px;width:36.60px;text-align:center;top:211.72px;font-size:4.70px;line-height:6.11px;color:#161616;">Add</span>
<div style="left:41.20px;top:209.10px;width:37.60px;height:8.70px;background:#797979;border-radius:0 1.5px 1.5px 0;box-shadow:0 0.5px 0.5px rgba(0,0,0,0.3);"></div>
<span class="t" style="left:41.20px;width:37.60px;text-align:center;top:211.72px;font-size:4.70px;line-height:6.11px;color:#161616;">Subtract</span>
<div class="panel" style="left:1.00px;top:223.50px;width:82.50px;height:190.00px;background:transparent;"></div>
<div style="left:1.00px;top:222.50px;width:82.50px;height:11.00px;background:linear-gradient(90deg,rgba(0,0,0,0.06),rgba(0,0,0,0.04) 80%,rgba(0,0,0,0.02));"></div>
<svg class="abs" style="left:6.20px;top:225.30px" width="5" height="5" viewBox="0 0 5 5"><polygon points="0,0.8 3.9,0.8 1.95,4.3" fill="#1c1c1c"/></svg>
<span class="t" style="left:12.00px;top:225.30px;font-size:5.25px;line-height:6.83px;color:#161616;">Options</span>
<span class="t" style="left:6.20px;top:240.12px;font-size:4.70px;line-height:6.11px;color:#161616;">Topology:</span>
<div style="left:4.50px;top:250.10px;width:74.00px;height:8.70px;background:#7a7a7a;border-radius:1.5px;box-shadow:0 0.5px 0.5px rgba(0,0,0,0.25);"></div>
<svg class="abs" style="left:5.8px;top:250.2px" width="8.4" height="8.4" viewBox="0 0 9 9"><path d="M1,3.4 H2.6 L5,1 V8 L2.6,5.6 H1 Z" fill="#e8e8e8"/><path d="M6,2.5 Q7.8,4.5 6,6.5" stroke="#4b7fd0" stroke-width="0.9" fill="none"/></svg>
<span class="t" style="left:5.00px;width:79.00px;text-align:center;top:252.72px;font-size:4.70px;line-height:6.11px;color:#161616;font-weight:bold;font-size:4.3px;">Enable Dynamic</span>
<div class="slider" style="left:4.50px;top:261.70px;width:74.00px;height:8.70px;background:#646464;border:0.5px solid #606060;box-sizing:border-box;overflow:hidden;border-radius:4.3px 4.3px 4.3px 4.3px;"></div>
<svg class="abs" style="left:6.00px;top:264.05px" width="71.00" height="4" viewBox="0 0 71.00 4"><path d="M2.6,0.4 L0.8,2 L2.6,3.6 Z M68.40,0.4 L70.20,2 L68.40,3.6 Z" fill="#747474"/></svg>
<span class="t" style="left:4.50px;width:74.00px;text-align:center;top:264.17px;font-size:4.70px;line-height:6.11px;color:#4a4a4a;">Detail Size: 30</span>
<div style="left:6.20px;top:273.40px;width:6.60px;height:6.60px;background:#727272;border:0.5px solid #6e6e6e;box-sizing:border-box;border-radius:1.2px;"></div>
<span class="t" style="left:14.70px;top:274.82px;font-size:4.70px;line-height:6.11px;color:#4c4c4c;">Smooth Shading</span>
<div style="left:6.20px;top:283.90px;width:6.60px;height:6.60px;background:#727272;border:0.5px solid #6e6e6e;box-sizing:border-box;border-radius:1.2px;"></div>
<span class="t" style="left:14.70px;top:285.32px;font-size:4.70px;line-height:6.11px;color:#4c4c4c;">Collapse Short Edges</span>
<span class="t" style="left:6.20px;top:297.12px;font-size:4.70px;line-height:6.11px;color:#161616;">Lock:</span>
<div style="left:4.50px;top:306.30px;width:24.40px;height:9.40px;background:#787878;border-radius:1px;box-shadow:0 0.5px 0.5px rgba(0,0,0,0.25);"></div>
<span class="t" style="left:4.50px;width:24.40px;text-align:center;top:309.12px;font-size:4.70px;line-height:6.11px;color:#161616;">X</span>
<div style="left:29.20px;top:306.30px;width:24.40px;height:9.40px;background:#787878;border-radius:1px;box-shadow:0 0.5px 0.5px rgba(0,0,0,0.25);"></div>
<span class="t" style="left:29.20px;width:24.40px;text-align:center;top:309.12px;font-size:4.70px;line-height:6.11px;color:#161616;">Y</span>
<div style="left:53.90px;top:306.30px;width:24.40px;height:9.40px;background:#787878;border-radius:1px;box-shadow:0 0.5px 0.5px rgba(0,0,0,0.25);"></div>
<span class="t" style="left:53.90px;width:24.40px;text-align:center;top:309.12px;font-size:4.70px;line-height:6.11px;color:#161616;">Z</span>
<div style="left:5.50px;top:319.70px;width:6.60px;height:6.60px;background:#747474;border:0.5px solid #6b6b6b;box-sizing:border-box;border-radius:1.2px;"></div>
<svg class="abs" style="left:6.70px;top:318.90px" width="6" height="6" viewBox="0 0 6 6"><path d="M0.6,2.9 L2.1,4.7 L5.2,0.5" stroke="#1c1c1c" stroke-width="0.85" fill="none"/></svg>
<span class="t" style="left:14.00px;top:321.12px;font-size:4.70px;line-height:6.11px;color:#fff;">Threaded Sculpt</span>
<div style="left:5.50px;top:332.00px;width:6.60px;height:6.60px;background:#747474;border:0.5px solid #6b6b6b;box-sizing:border-box;border-radius:1.2px;"></div>
<span class="t" style="left:14.00px;top:333.42px;font-size:4.70px;line-height:6.11px;color:#161616;">Fast Navigate</span>
<div style="left:5.50px;top:343.50px;width:6.60px;height:6.60px;background:#747474;border:0.5px solid #6b6b6b;box-sizing:border-box;border-radius:1.2px;"></div>
<svg class="abs" style="left:6.70px;top:342.70px" width="6" height="6" viewBox="0 0 6 6"><path d="M0.6,2.9 L2.1,4.7 L5.2,0.5" stroke="#1c1c1c" stroke-width="0.85" fill="none"/></svg>
<span class="t" style="left:14.00px;top:344.92px;font-size:4.70px;line-height:6.11px;color:#fff;">Show Brush</span>
<div style="left:5.50px;top:355.30px;width:6.60px;height:6.60px;background:#747474;border:0.5px solid #6b6b6b;box-sizing:border-box;border-radius:1.2px;"></div>
<span class="t" style="left:14.00px;top:356.72px;font-size:4.70px;line-height:6.11px;color:#161616;">Use Deform Only</span>
<div class="slider" style="left:4.50px;top:366.00px;width:74.00px;height:8.80px;background:#5e5e5e;border:0.5px solid #585858;box-sizing:border-box;overflow:hidden;border-radius:4.4px 4.4px 4.4px 4.4px;"></div>
<svg class="abs" style="left:6.00px;top:368.40px" width="71.00" height="4" viewBox="0 0 71.00 4"><path d="M2.6,0.4 L0.8,2 L2.6,3.6 Z M68.40,0.4 L70.20,2 L68.40,3.6 Z" fill="#808080"/></svg>
<span class="t" style="left:4.50px;width:74.00px;text-align:center;top:368.52px;font-size:4.70px;line-height:6.11px;color:#161616;">Input Samples: 1</span>
<span class="t" style="left:6.20px;top:380.82px;font-size:4.70px;line-height:6.11px;color:#161616;">Unified Settings:</span>
<div style="left:5.50px;top:391.00px;width:6.60px;height:6.60px;background:#747474;border:0.5px solid #6b6b6b;box-sizing:border-box;border-radius:1.2px;"></div>
<svg class="abs" style="left:6.70px;top:390.20px" width="6" height="6" viewBox="0 0 6 6"><path d="M0.6,2.9 L2.1,4.7 L5.2,0.5" stroke="#1c1c1c" stroke-width="0.85" fill="none"/></svg>
<span class="t" style="left:14.00px;top:392.42px;font-size:4.70px;line-height:6.11px;color:#fff;">Size</span>
<div style="left:5.50px;top:403.40px;width:6.60px;height:6.60px;background:#747474;border:0.5px solid #6b6b6b;box-sizing:border-box;border-radius:1.2px;"></div>
<span class="t" style="left:14.00px;top:404.82px;font-size:4.70px;line-height:6.11px;color:#161616;">Strength</span>
<div class="panel" style="left:1.00px;top:414.80px;width:82.50px;height:11.20px;background:linear-gradient(90deg,rgba(0,0,0,0.06),rgba(0,0,0,0.04) 80%,rgba(0,0,0,0.02));"></div>
<svg class="abs" style="left:6.20px;top:417.60px" width="5" height="5" viewBox="0 0 5 5"><polygon points="0,0.5 0,4.5 3.4,2.5" fill="#1c1c1c"/></svg>
<span class="t" style="left:12.10px;top:417.70px;font-size:5.25px;line-height:6.83px;color:#161616;">Texture</span>
<div class="panel" style="left:1.00px;top:426.40px;width:82.50px;height:11.20px;background:linear-gradient(90deg,rgba(0,0,0,0.06),rgba(0,0,0,0.04) 80%,rgba(0,0,0,0.02));"></div>
<svg class="abs" style="left:6.20px;top:429.20px" width="5" height="5" viewBox="0 0 5 5"><polygon points="0,0.5 0,4.5 3.4,2.5" fill="#1c1c1c"/></svg>
<span class="t" style="left:12.10px;top:429.30px;font-size:5.25px;line-height:6.83px;color:#161616;">Stroke</span>
<div class="panel" style="left:1.00px;top:437.80px;width:82.50px;height:11.20px;background:linear-gradient(90deg,rgba(0,0,0,0.06),rgba(0,0,0,0.04) 80%,rgba(0,0,0,0.02));"></div>
<svg class="abs" style="left:6.20px;top:440.60px" width="5" height="5" viewBox="0 0 5 5"><polygon points="0,0.5 0,4.5 3.4,2.5" fill="#1c1c1c"/></svg>
<span class="t" style="left:12.10px;top:440.70px;font-size:5.25px;line-height:6.83px;color:#161616;">Curve</span>
<div class="panel" style="left:1.00px;top:449.40px;width:82.50px;height:11.20px;background:linear-gradient(90deg,rgba(0,0,0,0.06),rgba(0,0,0,0.04) 80%,rgba(0,0,0,0.02));"></div>
<svg class="abs" style="left:6.20px;top:452.20px" width="5" height="5" viewBox="0 0 5 5"><polygon points="0,0.5 0,4.5 3.4,2.5" fill="#1c1c1c"/></svg>
<span class="t" style="left:12.10px;top:452.30px;font-size:5.25px;line-height:6.83px;color:#161616;">Symmetry</span>
<div class="panel" style="left:1.00px;top:460.70px;width:82.50px;height:11.20px;background:linear-gradient(90deg,rgba(0,0,0,0.06),rgba(0,0,0,0.04) 80%,rgba(0,0,0,0.02));"></div>
<svg class="abs" style="left:6.20px;top:463.50px" width="5" height="5" viewBox="0 0 5 5"><polygon points="0,0.5 0,4.5 3.4,2.5" fill="#1c1c1c"/></svg>
<span class="t" style="left:12.10px;top:463.60px;font-size:5.25px;line-height:6.83px;color:#161616;">Appearance</span>
<div style="left:74.40px;top:470.40px;width:6.00px;height:5.40px;background:#929292;border:0.9px solid #545454;box-sizing:border-box;border-radius:0.8px;"></div>
<div style="left:6.90px;top:479.90px;width:4.20px;height:4.20px;background:radial-gradient(circle at 40% 40%,#d8d8d8,#a0a0a0);border-radius:50%;"></div>
<span class="t" style="left:17.90px;top:481.42px;font-size:4.70px;line-height:6.11px;color:#161616;">View</span>
<span class="t" style="left:35.80px;top:481.42px;font-size:4.70px;line-height:6.11px;color:#161616;">Sculpt</span>
<span class="t" style="left:57.80px;top:481.42px;font-size:4.70px;line-height:6.11px;color:#161616;">Brush</span>
<span class="t" style="left:78.00px;top:481.42px;font-size:4.70px;line-height:6.11px;color:#161616;">Hide/Mask</span>
<div style="left:109.50px;top:478.70px;width:57.50px;height:9.20px;background:#686868;border-radius:2px;"></div>
<svg class="abs" style="left:111.6px;top:479.4px" width="7" height="7.6" viewBox="0 0 7 7.6"><path d="M0.8,7 L5.4,1.6" stroke="#dcdcdc" stroke-width="1.2" stroke-linecap="round"/><path d="M5,1.9 L6.4,0.4" stroke="#444" stroke-width="1" stroke-linecap="round"/></svg>
<span class="t" style="left:119.80px;top:481.22px;font-size:4.70px;line-height:6.11px;color:#161616;">Sculpt Mode</span>
<svg class="abs" style="left:163.2px;top:480.2px" width="3" height="6" viewBox="0 0 3 6"><path d="M0.2,2.4 L1.5,0.6 L2.8,2.4 Z M0.2,3.6 L1.5,5.4 L2.8,3.6 Z" fill="#555"/></svg>
<div style="left:172.40px;top:478.70px;width:15.60px;height:9.20px;background:#6a6a6a;border-radius:2px;"></div>
<div style="left:175.00px;top:480.40px;width:5.20px;height:5.20px;background:radial-gradient(circle at 40% 35%,#ffffff,#d4d4d4);border-radius:50%;"></div>
<svg class="abs" style="left:183.6px;top:480.2px" width="3" height="6" viewBox="0 0 3 6"><path d="M0.2,2.4 L1.5,0.6 L2.8,2.4 Z M0.2,3.6 L1.5,5.4 L2.8,3.6 Z" fill="#585858"/></svg>
<div style="left:190.50px;top:478.90px;width:24.00px;height:8.80px;background:#747474;border:0.5px solid #6a6a6a;box-sizing:border-box;border-radius:2px;"></div>
<div style="left:216.50px;top:478.90px;width:24.00px;height:8.80px;background:#747474;border:0.5px solid #6a6a6a;box-sizing:border-box;border-radius:2px;"></div>
<div style="left:244.00px;top:478.80px;width:8.60px;height:9.00px;background:linear-gradient(135deg,#8a8a8a,#a8a8a8);border:0.8px solid #3c3c3c;box-sizing:border-box;border-radius:1.5px;"></div>
<svg class="abs" style="left:255.6px;top:479px" width="8" height="8.4" viewBox="0 0 8 8.4"><rect x="0.6" y="2.2" width="5.6" height="5" fill="#d8d8d8"/><circle cx="5.4" cy="2.6" r="2" fill="#e6d27a"/><rect x="1.4" y="4.2" width="2" height="2.4" fill="#555"/></svg>
<svg class="abs" style="left:264.6px;top:479px" width="8" height="8.4" viewBox="0 0 8 8.4"><rect x="0.6" y="3" width="6.6" height="4.6" fill="#e4e4e4"/><rect x="0.6" y="1.2" width="6.6" height="2" fill="#2c2c2c"/><rect x="1.4" y="4.4" width="5" height="1.2" fill="#3a4a6a"/></svg>
<svg class="abs" style="left:96px;top:455px" width="16" height="17" viewBox="0 0 16 17"><path d="M4,14 L4,2" stroke="#2c2cc0" stroke-width="0.75"/><path d="M2.2,14 L8,14 L13,11.2" stroke="#b4222c" stroke-width="0.75" fill="none"/></svg>
<div style="left:794.00px;top:24.20px;width:5.00px;height:5.00px;background:radial-gradient(circle,#b8b8b8 25%,#2c2c2c 60%);border-radius:50%;"></div>
</div></body></html>
